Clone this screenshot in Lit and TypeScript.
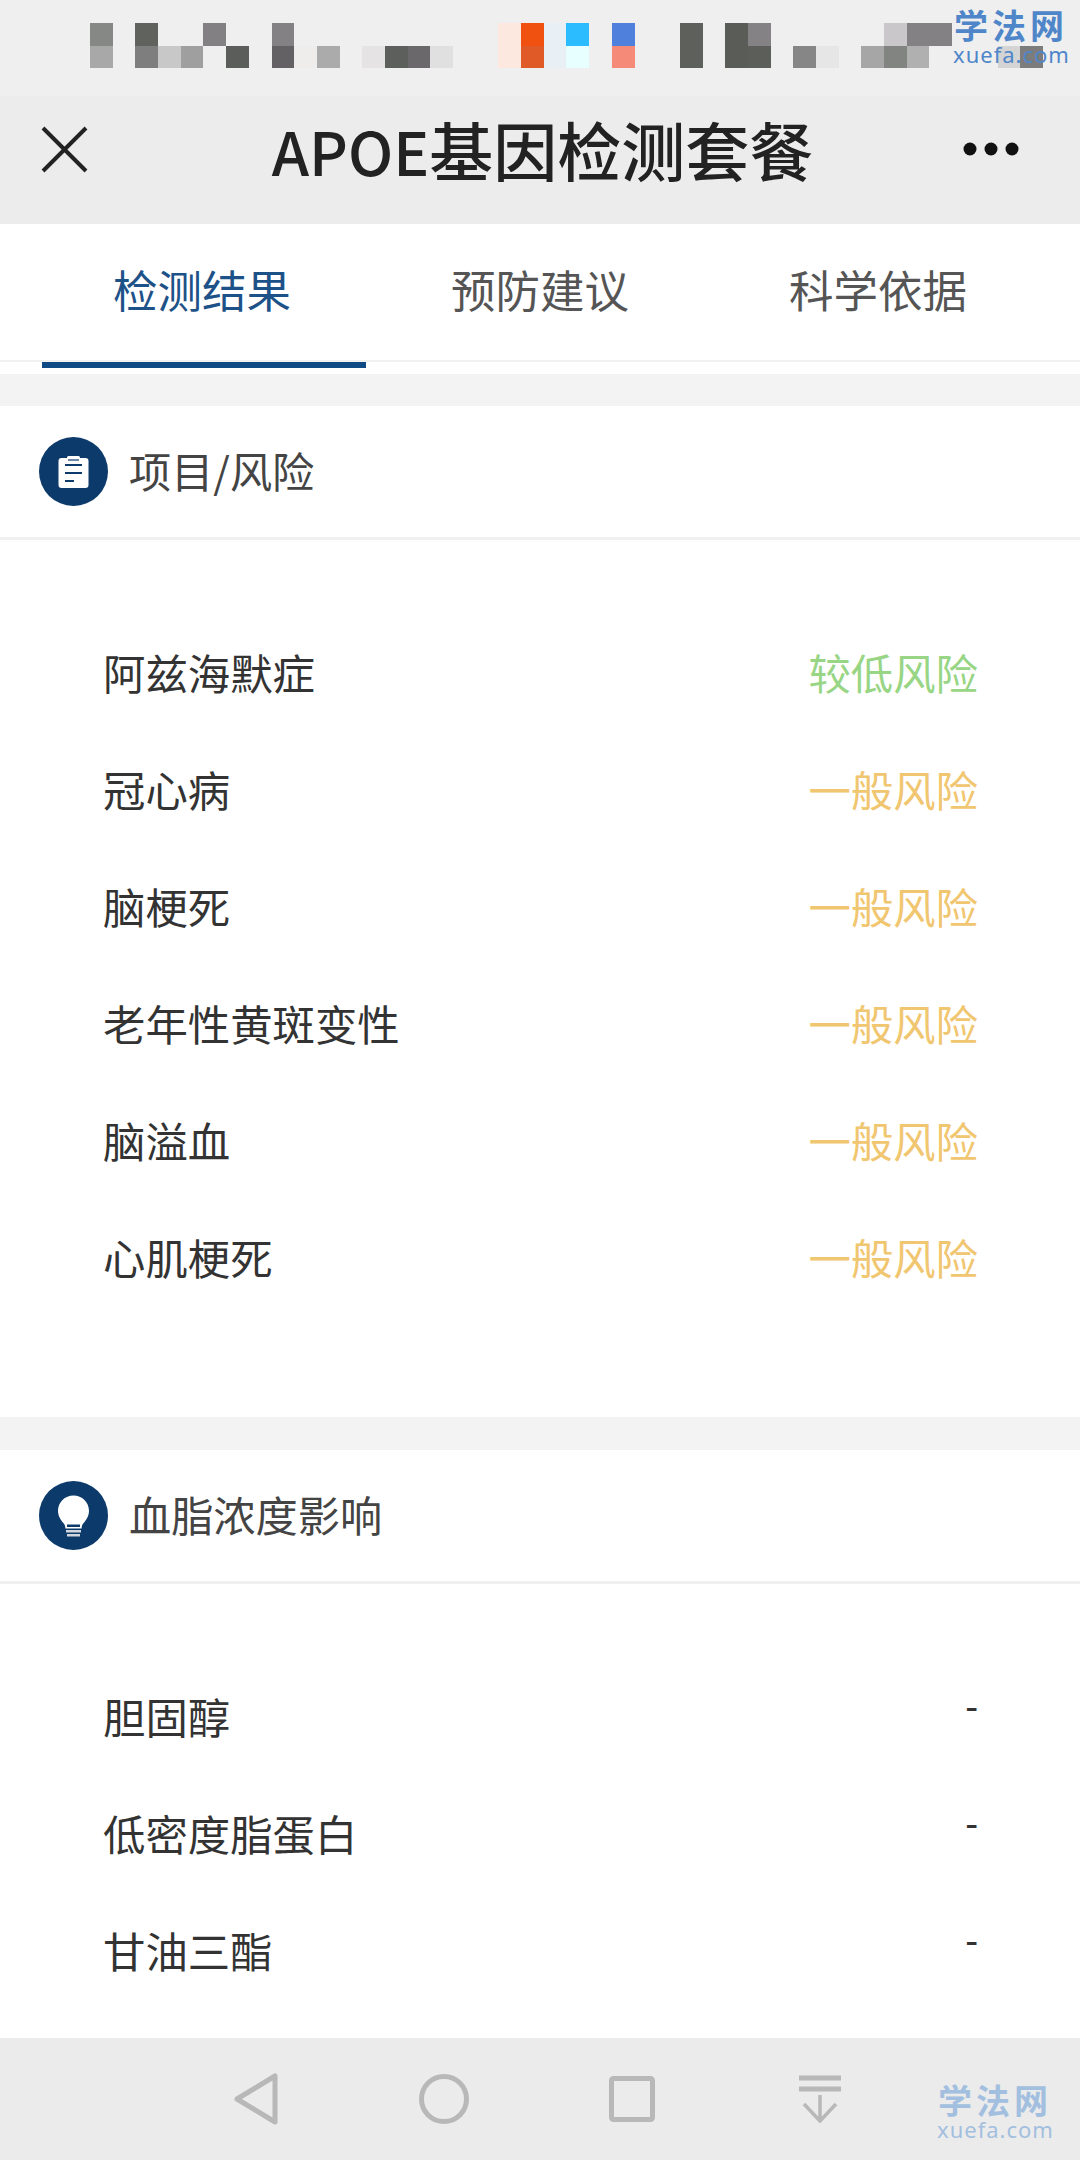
import { LitElement, html, css, svg } from 'lit';
import { customElement } from 'lit/decorators.js';

// pixelated status bar: [column, top colour, bottom colour]
const MOSAIC: [number, string, string][] = [
  [0, '#868885', '#a8a8a8'],
  [2, '#60625e', '#7e7e7e'],
  [3, '', '#c8c8c8'],
  [4, '', '#9f9f9f'],
  [5, '#828082', ''],
  [6, '', '#5b5d5a'],
  [8, '#838183', '#636163'],
  [9, '', '#efecec'],
  [10, '', '#ababab'],
  [12, '', '#e6e3e5'],
  [13, '', '#5d5f5c'],
  [14, '', '#6a686a'],
  [15, '', '#e0e0e0'],
  [18, '#fde8e0', '#fde8e0'],
  [19, '#f05010', '#e05a28'],
  [20, '#e8f0f5', '#e8f0f5'],
  [21, '#2bbcff', '#e8ffff'],
  [23, '#4f80dc', '#f58a78'],
  [26, '#5e605c', '#5e605c'],
  [28, '#5a5c58', '#5a5c58'],
  [29, '#848284', '#5c5e5a'],
  [31, '', '#868686'],
  [32, '', '#e6e6e6'],
  [34, '', '#a6a6a6'],
  [35, '#c9c7c9', '#828482'],
  [36, '#838183', '#b0b0b0'],
  [37, '#838183', ''],
  [40, '', '#d4d4d4'],
  [41, '', '#7c7c7c'],
];

const RISKS = [
  { name: '阿兹海默症', value: '较低风险', level: 'low' },
  { name: '冠心病', value: '一般风险', level: 'mid' },
  { name: '脑梗死', value: '一般风险', level: 'mid' },
  { name: '老年性黄斑变性', value: '一般风险', level: 'mid' },
  { name: '脑溢血', value: '一般风险', level: 'mid' },
  { name: '心肌梗死', value: '一般风险', level: 'mid' },
];

const LIPIDS = ['胆固醇', '低密度脂蛋白', '甘油三酯'];

const clipboardIcon = svg`
  <circle cx="34.5" cy="34.5" r="34.5" fill="#0c3a6b" />
  <rect x="19.5" y="21" width="30" height="30" rx="3" fill="#fff" />
  <rect x="28" y="19" width="13" height="5" rx="1.5" fill="#fff" />
  <path d="M29 23h11" stroke="#0c3a6b" stroke-width="1.2" fill="none" />
  <path d="M26 28h17M26 36h17M26 44h9" stroke="#0c3a6b" stroke-width="1.800" fill="none" />
`;

const bulbIcon = svg`
  <circle cx="34.5" cy="34.5" r="34.5" fill="#0c3a6b" />
  <path d="M34.5 14.5c-8.6 0-15.5 6.8-15.5 15.2 0 5.4 2.8 9.3 5.4 12.3 1.600 1.900 1.900 3.500 2 5.500h16.200c.1-2 .4-3.600 2-5.500 2.600-3 5.400-6.900 5.400-12.300 0-8.400-6.900-15.200-15.500-15.200z" fill="#fff" />
  <rect x="28" y="43.500" width="13" height="2.500" fill="#0c3a6b" />
  <rect x="27" y="49" width="15" height="2.500" fill="#cfd6de" />
  <rect x="28" y="53" width="13" height="2.500" fill="#cfd6de" />
`;

@customElement('app-root')
export class AppRoot extends LitElement {
  static styles = css`
    :host {
      display: flex;
      flex-direction: column;
      position: relative;
      width: 1080px;
      height: 2160px;
      overflow: hidden;
      background: #fff;
      font-family: 'Noto Sans CJK SC', 'Noto Sans', sans-serif;
      color: #333;
    }

    .status {
      height: 96px;
      box-sizing: border-box;
      padding: 23px 0 0 90px;
      background: #efefef;
      display: grid;
      grid-template-columns: repeat(42, 22.7px);
      grid-auto-rows: 22.7px;
      grid-auto-flow: column;
      align-content: start;
    }

    .nav {
      height: 128px;
      box-sizing: border-box;
      background: #ececec;
      display: flex;
      align-items: center;
      justify-content: space-between;
      padding: 0 61px 22px 41px;
    }

    .nav svg { display: block; flex: none; }

    .title {
      font-size: 64px;
      line-height: 80px;
      font-weight: 500;
      color: #222;
      white-space: nowrap;
      margin-left: 34px;
    }

    .latin { font-size: 60px; }

    .tabs {
      height: 136px;
      padding: 0 33px;
      display: grid;
      grid-template-columns: repeat(3, 338px);
      border-bottom: 2px solid #f1f1f1;
    }

    .tab {
      position: relative;
      text-align: center;
      font-size: 44.5px;
      line-height: 130px;
      height: 136px;
      color: #555;
    }

    .tab.active { color: #1d5288; }

    .tab.active::after {
      content: '';
      position: absolute;
      left: 9px;
      right: 5px;
      top: 138px;
      height: 6px;
      background: #0f4a85;
    }

    .gap {
      height: 32px;
      margin-top: 12px;
      background: #f3f3f3;
    }

    .gap.second {
      height: 33px;
      margin-top: 0;
    }

    .section-head {
      height: 131px;
      padding-left: 39px;
      display: flex;
      align-items: center;
      gap: 21px;
      border-bottom: 3px solid #f0f0f0;
      font-size: 42.2px;
      color: #444;
    }

    .section-head span { margin-bottom: 4px; }

    .list {
      padding: 75px 102px 100px 103px;
      height: 702px;
    }

    .list.lipids { height: auto; padding-bottom: 0; }

    .row {
      height: 117px;
      box-sizing: border-box;
      padding-bottom: 5px;
      display: flex;
      align-items: center;
      justify-content: space-between;
      font-size: 42.4px;
      color: #333;
    }

    .low { color: #98d585; }
    .mid { color: #f1c670; }

    .dash {
      font-size: 36px;
      font-weight: 500;
      color: #333;
      margin-bottom: 23px;
    }

    .spacer { flex: 1; }

    .bottom {
      height: 122px;
      background: #ebebeb;
      display: flex;
      align-items: center;
      padding-left: 226px;
      gap: 128px;
    }

    .slot {
      width: 60px;
      display: flex;
      justify-content: center;
    }

    .slot svg { display: block; }

    .mark {
      position: absolute;
      width: 116px;
      text-align: center;
      white-space: nowrap;
      color: #4f86c9;
    }

    .mark b {
      display: block;
      font-size: 34px;
      line-height: 34px;
      letter-spacing: 4px;
      font-weight: 700;
    }

    .mark span {
      display: block;
      font-family: 'Noto Sans', sans-serif;
      font-size: 22px;
      line-height: 24px;
      letter-spacing: 1px;
    }

    .mark.top { left: 953px; top: 8px; }
    .mark.foot { left: 937px; top: 2083px; color: #a3bfdf; }
  `;

  render() {
    return html`
      <div class="status">
        ${MOSAIC.map(
          ([col, top, bottom]) => html`
            <i style="grid-column:${col + 1};grid-row:1;background:${top || 'none'}"></i>
            <i style="grid-column:${col + 1};grid-row:2;background:${bottom || 'none'}"></i>
          `,
        )}
      </div>
      <div class="nav">
        <svg width="47" height="47" viewBox="0 0 47 47">
          <path d="M2 2l43 43M45 2L2 45" stroke="#222" stroke-width="4" fill="none" />
        </svg>
        <div class="title"><span class="latin">APOE</span>基因检测套餐</div>
        <svg width="56" height="14" viewBox="0 0 56 14">
          <circle cx="7" cy="7" r="6.500" fill="#111" />
          <circle cx="28" cy="7" r="6.500" fill="#111" />
          <circle cx="49" cy="7" r="6.500" fill="#111" />
        </svg>
      </div>
      <div class="tabs">
        <div class="tab active">检测结果</div>
        <div class="tab">预防建议</div>
        <div class="tab">科学依据</div>
      </div>
      <div class="gap"></div>
      <div class="section-head">
        <svg width="69" height="69" viewBox="0 0 69 69">${clipboardIcon}</svg>
        <span>项目/风险</span>
      </div>
      <div class="list">
        ${RISKS.map(
          (r) => html`<div class="row"><span>${r.name}</span><span class=${r.level}>${r.value}</span></div>`,
        )}
      </div>
      <div class="gap second"></div>
      <div class="section-head">
        <svg width="69" height="69" viewBox="0 0 69 69">${bulbIcon}</svg>
        <span>血脂浓度影响</span>
      </div>
      <div class="list lipids">
        ${LIPIDS.map((name) => html`<div class="row"><span>${name}</span><span class="dash">-</span></div>`)}
      </div>
      <div class="spacer"></div>
      <div class="bottom">
        <div class="slot">
          <svg width="44" height="52" viewBox="0 0 44 52">
            <path d="M41 3v46L3 26z" fill="none" stroke="#b8b8b8" stroke-width="5" stroke-linejoin="round" />
          </svg>
        </div>
        <div class="slot">
          <svg width="50" height="50" viewBox="0 0 50 50">
            <circle cx="25" cy="25" r="22.500" fill="none" stroke="#b8b8b8" stroke-width="5" />
          </svg>
        </div>
        <div class="slot">
          <svg width="46" height="46" viewBox="0 0 46 46">
            <rect x="2.500" y="2.500" width="41" height="41" rx="2" fill="none" stroke="#b8b8b8" stroke-width="5" />
          </svg>
        </div>
        <div class="slot">
          <svg width="44" height="48" viewBox="0 0 44 48">
            <path d="M1 3h42M1 14h42" stroke="#b8b8b8" stroke-width="5" fill="none" />
            <path d="M22 20v26M6 29l16 17 16-17" stroke="#b8b8b8" stroke-width="3.500" fill="none" />
          </svg>
        </div>
      </div>
      <div class="mark top"><b>学法网</b><span>xuefa.com</span></div>
      <div class="mark foot"><b>学法网</b><span>xuefa.com</span></div>
    `;
  }
}
